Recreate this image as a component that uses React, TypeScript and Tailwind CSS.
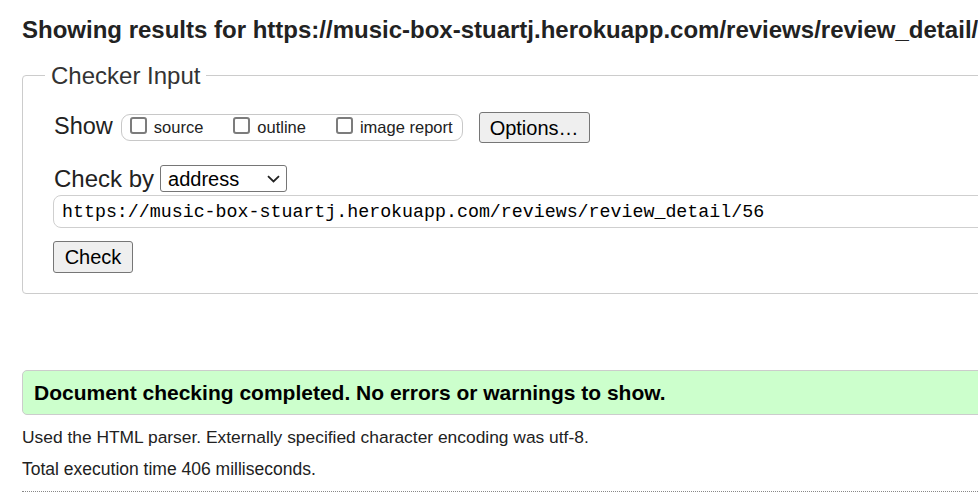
import React from "react";

function Box({ label, className }: { label: string; className?: string }) {
  return (
    <label className={"flex items-center " + (className ?? "")}>
      <input
        type="checkbox"
        className="appearance-none shrink-0 box-border w-[17px] h-[17px] m-0 mr-[7px] mb-[5px] border-2 border-[#7c7c7c] rounded-[3px] bg-white"
      />
      <span>{label}</span>
    </label>
  );
}

export default function App() {
  return (
    <div className="w-[978px] h-[504px] overflow-hidden bg-white font-['Liberation_Sans',Arial,sans-serif] text-[#222]">
      <div className="px-[22px]">
        <h2 className="mt-[16px] text-[24px] leading-[28px] font-bold whitespace-nowrap text-[#222]">
          Showing results for https://music-box-stuartj.herokuapp.com/reviews/review_detail/56
        </h2>

        <fieldset className="mt-[16px] w-[1200px] border border-[#ccc] rounded-[4px] pl-[22px] pr-[22px] pb-[20px]">
          <legend className="px-[6px] pt-[2px] text-[24px] leading-[28px] text-[#333]">Checker Input</legend>
          <div className="pl-[8px] pt-[22px]">
            <div className="flex items-center h-[31px]">
              <span className="text-[23.5px] leading-[27px] mb-[2px] ml-[1px] text-[#222]">Show</span>
              <div className="ml-[8px] h-[27px] flex items-center border border-[#c8c8c8] rounded-[9px] pl-[8px] pr-[9px] text-[16.5px] leading-[19px] text-[#222]">
                <Box label="source" />
                <Box label="outline" className="ml-[30px]" />
                <Box label="image report" className="ml-[30px]" />
              </div>
              <button className="ml-[16px] w-[111px] h-[31px] border border-[#767676] rounded-[3px] bg-[#efefef] text-[20px] leading-[24px] text-black">
                Options…
              </button>
            </div>

            <div className="flex items-center mt-[22px] h-[27px]">
              <span className="text-[24px] leading-[27px] ml-[1px] text-[#222]">Check by</span>
              <div className="ml-[6px] w-[127px] h-[27px] border border-[#767676] rounded-[3px] bg-white flex items-center justify-between pl-[7px] pr-[6px]">
                <span className="text-[20px] leading-[24px] text-black">address</span>
                <svg width="13" height="8" viewBox="0 0 13 8" className="mt-[1px]">
                  <path d="M1 1.2 L6.5 6.5 L12 1.2" fill="none" stroke="#222" strokeWidth="1.8" />
                </svg>
              </div>
            </div>

            <div className="mt-[3px] w-[1100px] h-[33px] border border-[#cfcfcf] rounded-[8px] flex items-center pl-[8px]">
              <span className="font-['Liberation_Mono','DejaVu_Sans_Mono',monospace] text-[18.3px] leading-[24px] text-black whitespace-nowrap">
                https://music-box-stuartj.herokuapp.com/reviews/review_detail/56
              </span>
            </div>

            <button className="mt-[13px] block w-[80px] h-[32px] border border-[#767676] rounded-[3px] bg-[#efefef] text-[20px] leading-[24px] text-black">
              Check
            </button>
          </div>
        </fieldset>

        <div className="mt-[76px] w-[1200px] border border-[#ccc] rounded-[5px] bg-[#ccffcc] pl-[11px] pt-[10px] pb-[9px]">
          <p className="text-[21px] leading-[24px] font-bold text-black whitespace-nowrap">
            Document checking completed. No errors or warnings to show.
          </p>
        </div>

        <p className="mt-[10px] text-[17.4px] leading-[24px] text-[#222] whitespace-nowrap">
          Used the HTML parser. Externally specified character encoding was utf-8.
        </p>
        <p className="mt-[8px] text-[17.5px] leading-[24px] text-[#222] whitespace-nowrap">
          Total execution time 406 milliseconds.
        </p>
        <div className="mt-[10px] w-[1200px] border-t border-dotted border-[#888]" />
      </div>
    </div>
  );
}
